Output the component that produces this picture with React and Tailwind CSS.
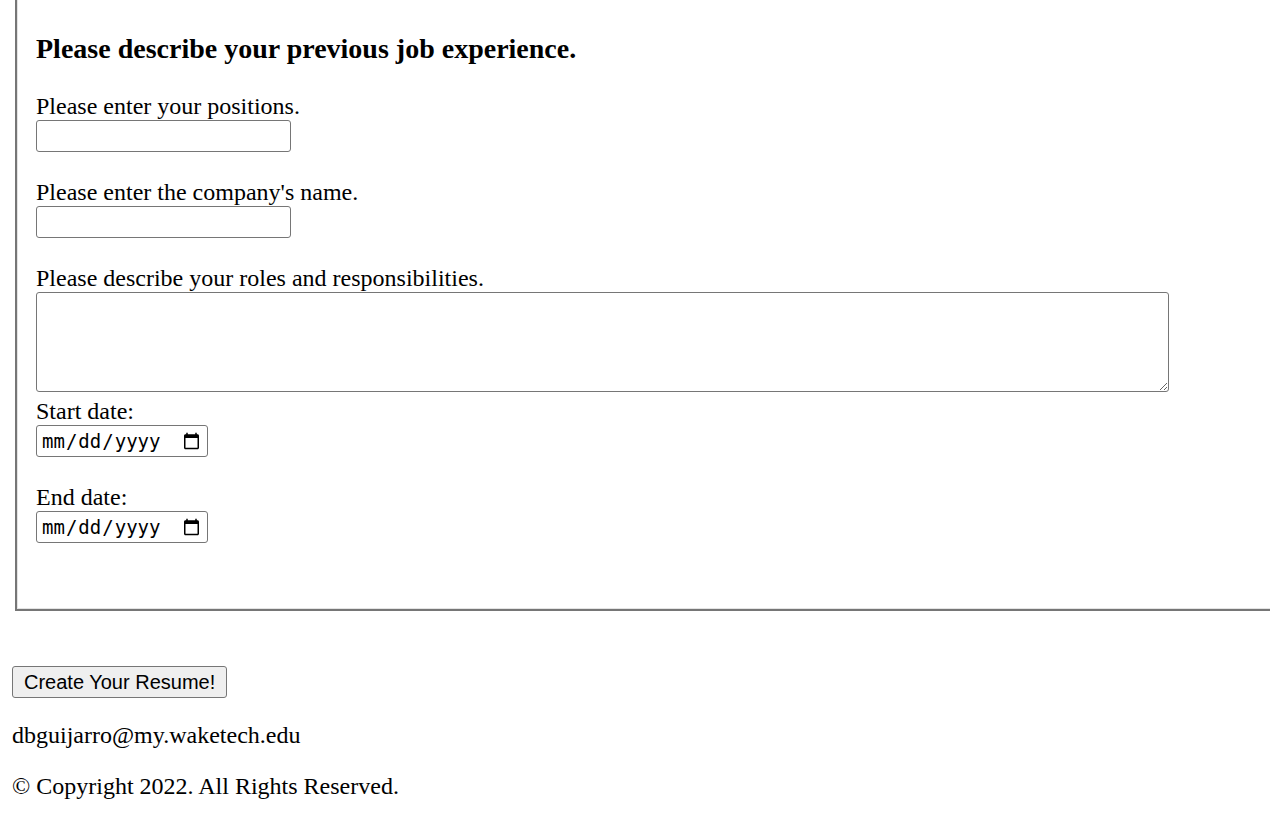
import React from "react";

export default function App() {
  const serif = { fontFamily: '"Liberation Serif", "Times New Roman", serif' };
  const mono = { fontFamily: '"DejaVu Sans Mono", "Liberation Mono", monospace' };
  return (
    <div className="overflow-hidden bg-white text-black w-[1270px] min-h-[817px]" style={serif}>
      <div className="px-[12px]">
        {/* fieldset (scrolled, top border out of view) */}
        <div className="ml-[3px] -mr-[12px] border-l-2 border-b-2 border-[#767676]">
          <div className="border-l border-b border-[#e3e3e3] pl-[18px] pb-[65px]">
            <h3 className="pt-[33px] text-[28px] leading-[32px] font-bold">
              Please describe your previous job experience.
            </h3>

            <label className="block mt-[27px] text-[24px] leading-[28px]">
              Please enter your positions.
            </label>
            <input
              type="text"
              className="block w-[255px] h-[32px] border border-[#767676] rounded-[3px] bg-white outline-none"
            />

            <label className="block mt-[26px] text-[24px] leading-[28px]">
              Please enter the company's name.
            </label>
            <input
              type="text"
              className="block w-[255px] h-[32px] border border-[#767676] rounded-[3px] bg-white outline-none"
            />

            <label className="block mt-[26px] text-[24px] leading-[28px]">
              Please describe your roles and responsibilities.
            </label>
            <textarea
              className="block w-[1133px] h-[100px] border border-[#767676] rounded-[3px] bg-white outline-none"
            />

            <label className="block mt-[5px] text-[24px] leading-[28px]">Start date:</label>
            <input
              type="date"
              className="block w-[172px] h-[32px] border border-[#767676] rounded-[3px] bg-white px-[4px] text-[19px] outline-none"
              style={mono}
            />

            <label className="block mt-[26px] text-[24px] leading-[28px]">End date:</label>
            <input
              type="date"
              className="block w-[172px] h-[32px] border border-[#767676] rounded-[3px] bg-white px-[4px] text-[19px] outline-none"
              style={mono}
            />
          </div>
        </div>

        <button
          className="block mt-[55px] h-[32px] px-[11px] border border-[#767676] rounded-[3px] bg-[#efefef] text-[20px] leading-[30px] text-black"
          style={{ fontFamily: '"Liberation Sans", Arial, sans-serif' }}
        >
          Create Your Resume!
        </button>

        <p className="mt-[23px] text-[24px] leading-[28px]">dbguijarro@my.waketech.edu</p>
        <p className="mt-[23px] text-[24px] leading-[28px]">© Copyright 2022. All Rights Reserved.</p>
      </div>
    </div>
  );
}
